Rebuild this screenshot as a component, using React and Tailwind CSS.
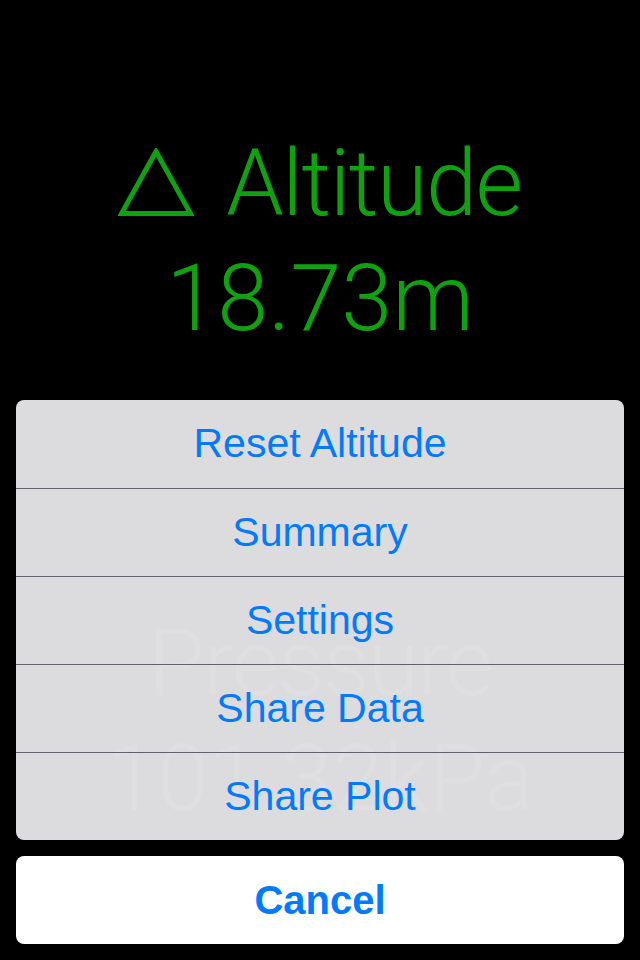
import React from 'react';

const ACTIONS = ['Reset Altitude', 'Summary', 'Settings', 'Share Data', 'Share Plot'];

function Reading({ icon, label, value }) {
  return (
    <div className="flex flex-col items-center text-[92px] leading-[112px] font-light font-['Roboto','Liberation_Sans',sans-serif]">
      <div className="flex items-start gap-[32px]">
        {icon}
        <span className="tracking-[-1.5px]">{label}</span>
      </div>
      <span className="mt-[3px]">{value}</span>
    </div>
  );
}

function Triangle() {
  return (
    <svg width="76" height="69" viewBox="0 0 76 69" className="mt-[20px]">
      <path d="M38 3.5 L3.5 65.5 L72.5 65.5 Z" fill="none" stroke="currentColor" strokeWidth="5" strokeLinejoin="miter" />
    </svg>
  );
}

export default function App() {
  return (
    <div className="relative h-[960px] w-[640px] overflow-hidden bg-black">
      {/* Screen underneath the action sheet */}
      <div className="flex flex-col items-center gap-[253px] pt-[128px]">
        <div className="text-[#0ea20e]">
          <Reading icon={<Triangle />} label="Altitude" value="18.73m" />
        </div>
        <div className="text-[#888888]">
          <Reading label="Pressure" value="101.32kPa" />
        </div>
      </div>

      {/* Action sheet */}
      <div className="absolute inset-x-4 bottom-4 flex flex-col gap-4 font-['Liberation_Sans',Arial,sans-serif] text-[#007aff]">
        <div className="overflow-hidden rounded-lg bg-[rgba(225,225,227,0.975)]">
          {ACTIONS.map((a, i) => (
            <div
              key={a}
              className={`flex h-[88px] items-center justify-center text-[41px] ${i > 0 ? 'border-t border-[#62626e]' : ''}`}
            >
              {a}
            </div>
          ))}
        </div>
        <div className="flex h-[88px] items-center justify-center rounded-lg bg-white text-[40px] font-bold">
          Cancel
        </div>
      </div>
    </div>
  );
}
